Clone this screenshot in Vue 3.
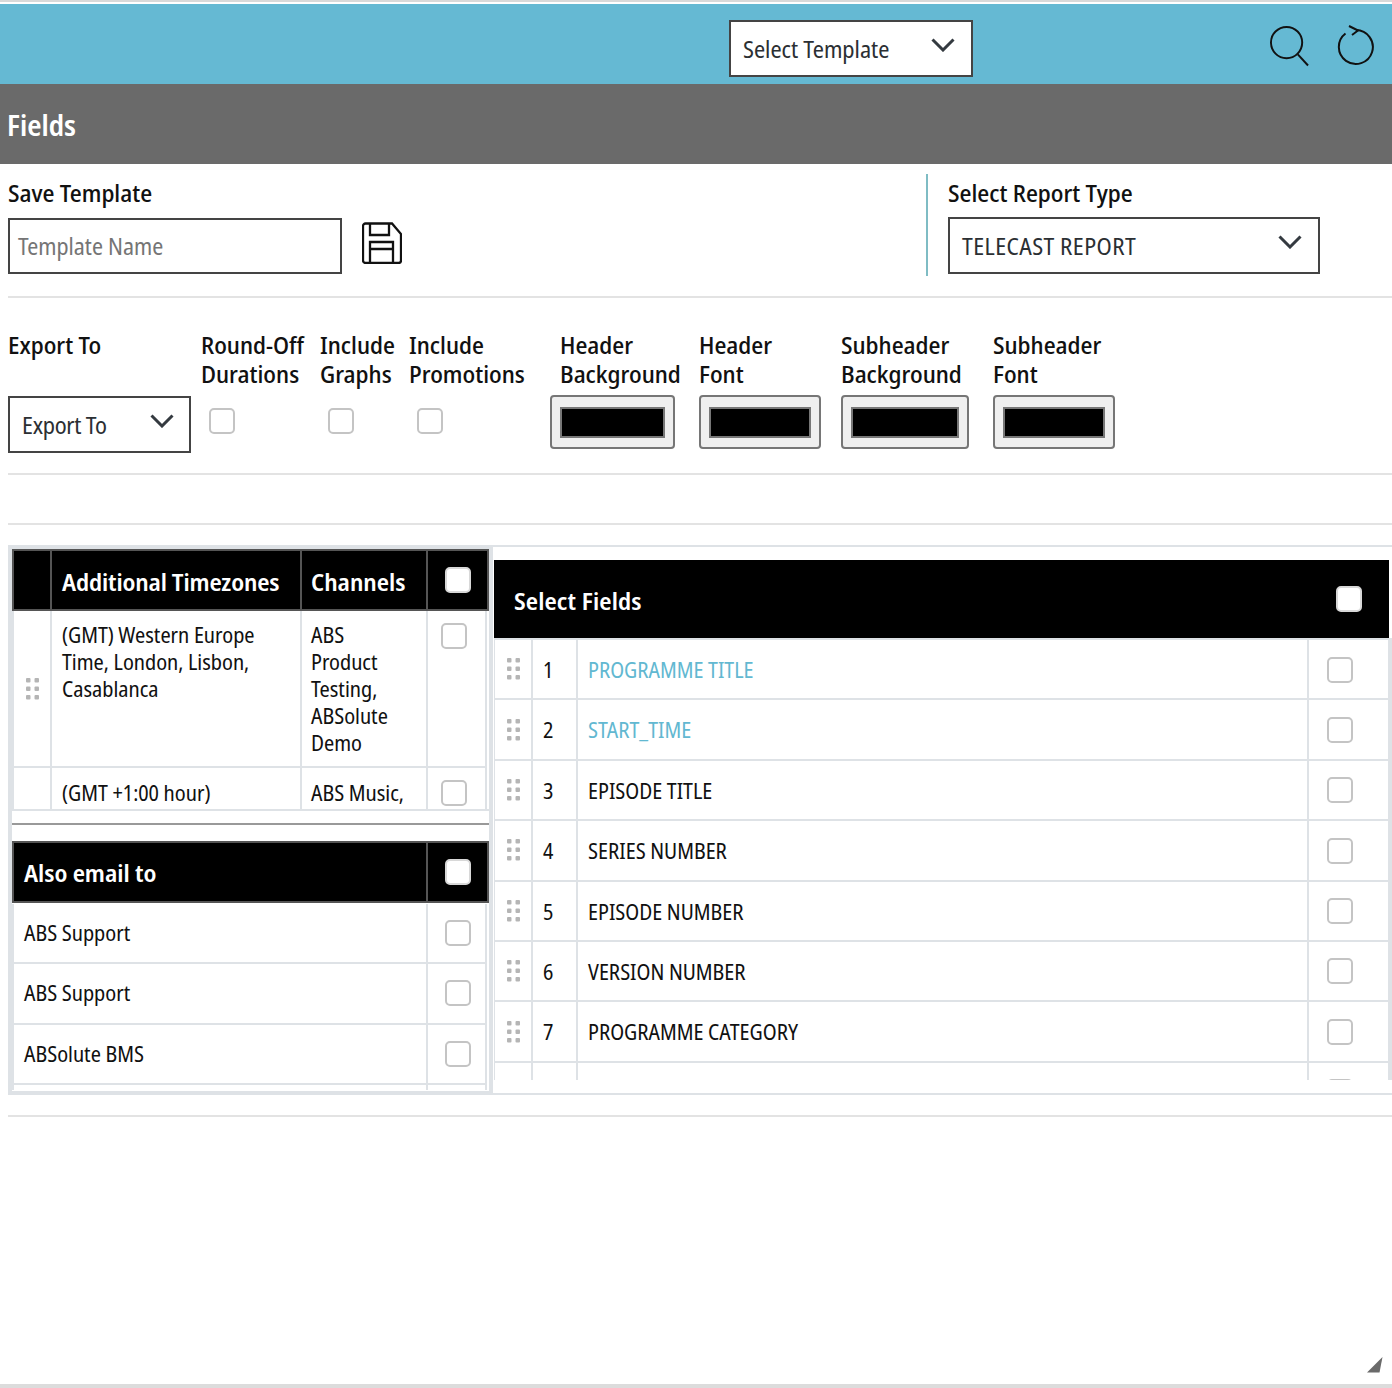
<script setup>
const exportChecks = [
  { label: ['Round-Off', 'Durations'], width: 119 },
  { label: ['Include', 'Graphs'], width: 89 },
  { label: ['Include', 'Promotions'], width: 141 },
]
const colours = [
  { label: ['Header', 'Background'], width: 149, box: 125, swatch: 105, first: true },
  { label: ['Header', 'Font'], width: 142, box: 122, swatch: 102 },
  { label: ['Subheader', 'Background'], width: 152, box: 128, swatch: 108 },
  { label: ['Subheader', 'Font'], width: 122, box: 122, swatch: 102 },
]
const zones = [
  { zone: ['(GMT) Western Europe', 'Time, London, Lisbon,', 'Casablanca'], channels: ['ABS', 'Product', 'Testing,', 'ABSolute', 'Demo'], handle: true },
  { zone: ['(GMT +1:00 hour)'], channels: ['ABS Music,'], handle: false },
]
const emails = ['ABS Support', 'ABS Support', 'ABSolute BMS', '']
const fields = [
  { n: 1, name: 'PROGRAMME TITLE', on: true },
  { n: 2, name: 'START_TIME', on: true },
  { n: 3, name: 'EPISODE TITLE' },
  { n: 4, name: 'SERIES NUMBER' },
  { n: 5, name: 'EPISODE NUMBER' },
  { n: 6, name: 'VERSION NUMBER' },
  { n: 7, name: 'PROGRAMME CATEGORY' },
  { n: '', name: '', blank: true },
]
const dots = [[0, 0], [8.5, 0], [0, 8.5], [8.5, 8.5], [0, 17], [8.5, 17]]
</script>

<template>
  <div class="page">
    <div class="topbar">
      <div class="select tpl">
        <span>Select Template</span>
        <svg class="chev" viewBox="0 0 24 14"><path d="M1.500 1.500 12 12 22.500 1.500" /></svg>
      </div>
      <svg class="ico search" viewBox="0 0 42 42"><circle cx="18" cy="17.500" r="16" /><path d="M29.500 29.500 40 41" /></svg>
      <svg class="ico refresh" viewBox="0 0 38 42"><path d="M8.500 8.500A17 17 0 1 0 19 5" /><path d="M12 1 21 5.500 15 10" /></svg>
    </div>
    <div class="fieldsbar">Fields</div>

    <section class="row-save">
      <div class="save-left">
        <div class="lbl">Save Template</div>
        <div class="save-line">
          <div class="input">Template Name</div>
          <svg class="floppy" viewBox="0 0 40 42">
            <path d="M3.500 1.500H30L39 12v26.500a2.500 2.500 0 0 1-2.500 2.500h-33A2.500 2.500 0 0 1 1 38.500V4a2.500 2.500 0 0 1 2.500-2.500Z" />
            <path d="M8 1.500V13H27V1.500M8 41V20H31V41M8 27H31" />
          </svg>
        </div>
      </div>
      <div class="save-right">
        <div class="lbl">Select Report Type</div>
        <div class="select report">
          <span>TELECAST REPORT</span>
          <svg class="chev" viewBox="0 0 24 14"><path d="M1.500 1.500 12 12 22.500 1.500" /></svg>
        </div>
      </div>
    </section>

    <section class="row-export">
      <div class="col col-export">
        <div class="lbl two">Export To</div>
        <div class="select exp">
          <span>Export To</span>
          <svg class="chev" viewBox="0 0 24 14"><path d="M1.500 1.500 12 12 22.500 1.500" /></svg>
        </div>
      </div>
      <div v-for="c in exportChecks" :key="c.label.join()" class="col" :style="{ width: c.width + 'px' }">
        <div class="lbl two"><div v-for="l in c.label" :key="l">{{ l }}</div></div>
        <span class="check opt"></span>
      </div>
      <div v-for="c in colours" :key="c.label.join()" class="col" :style="{ width: c.width + 'px' }">
        <div class="lbl two" :class="{ indent: c.first }"><div v-for="l in c.label" :key="l">{{ l }}</div></div>
        <div class="colorbox" :style="{ width: c.box + 'px' }">
          <div class="swatch" :style="{ width: c.swatch + 'px' }"></div>
        </div>
      </div>
    </section>

    <div class="spacer"></div>

    <section class="panels">
      <div class="left-panel">
        <div class="clip tz">
          <div class="head">
            <div class="c c-h"></div>
            <div class="c c-z th tight">Additional Timezones</div>
            <div class="c c-ch th">Channels</div>
            <div class="c c-k"><span class="check white"></span></div>
          </div>
          <div v-for="z in zones" :key="z.zone[0]" class="tr" :class="{ nudge: !z.handle }">
            <div class="c c-h mid">
              <svg v-if="z.handle" class="grip" viewBox="0 0 13 22"><rect v-for="d in dots" :key="d.join()" :x="d[0]" :y="d[1]" width="4.500" height="4.500" rx="1" /></svg>
            </div>
            <div class="c c-z td"><div v-for="l in z.zone" :key="l">{{ l }}</div></div>
            <div class="c c-ch td"><div v-for="l in z.channels" :key="l">{{ l }}</div></div>
            <div class="c c-k"><span class="check"></span></div>
          </div>
        </div>
        <div class="gap"><hr class="rule" /></div>
        <div class="clip em">
          <div class="head">
            <div class="c c-e th em-th">Also email to</div>
            <div class="c c-k2"><span class="check white"></span></div>
          </div>
          <div v-for="(e, i) in emails" :key="i" class="tr tr-email">
            <div class="c c-e td2">{{ e }}</div>
            <div class="c c-k2"><span v-if="e" class="check"></span></div>
          </div>
        </div>
      </div>

      <div class="right-panel">
        <div class="fhead">
          <span class="fhead-t">Select Fields</span>
          <span class="check white"></span>
        </div>
        <div class="clip fl">
          <div v-for="f in fields" :key="f.n" class="frow">
            <div class="f-h">
              <svg v-if="!f.blank" class="grip" viewBox="0 0 13 22"><rect v-for="d in dots" :key="d.join()" :x="d[0]" :y="d[1]" width="4.500" height="4.500" rx="1" /></svg>
            </div>
            <div class="f-n">{{ f.n }}</div>
            <div class="f-name" :class="{ on: f.on }">{{ f.name }}</div>
            <div class="f-k"><span class="check"></span></div>
          </div>
        </div>
      </div>
    </section>

    <div class="after"></div>
    <div class="grow"></div>
    <div class="foot"></div>
    <svg class="resize" viewBox="0 0 16 16">
      <path d="M0 15.500 15.500 0 12.500 15.500Z" fill="#6a6a6a" />
    </svg>
  </div>
</template>

<style>
html, body { margin: 0; background: #fff; }
</style>

<style scoped>
.page {
  position: relative;
  width: 1392px;
  height: 1388px;
  display: flex;
  flex-direction: column;
  font-family: "Noto Sans Display", "Noto Sans", sans-serif;
  font-stretch: 75%;
  font-size: 21px;
  line-height: 27px;
  color: #111;
  background: #fff;
  border-top: 2px solid #d9d9d9;
  box-sizing: border-box;
  overflow: hidden;
}
.topbar {
  margin-top: 2px;
  height: 80px;
  background: #65b9d3;
  display: flex;
  align-items: flex-start;
  position: relative;
  flex: none;
}
.select {
  box-sizing: border-box;
  display: flex;
  justify-content: space-between;
  align-items: center;
  border: 2px solid #444;
  background: #fff;
  height: 57px;
  color: #2b2f33;
  font-size: 23px;
}
.select span { margin-top: 2px; }
.chev { width: 24px; height: 14px; fill: none; stroke: #343a40; stroke-width: 3; margin-top: -8px; flex: none; }
.tpl { width: 244px; margin: 16px 0 0 729px; padding: 0 16px 0 12px; }
.ico { fill: none; stroke: #111; stroke-width: 2; flex: none; }
.search { width: 41px; height: 42px; margin: 21px 0 0 296px; }
.refresh { width: 38px; height: 42px; margin: 21px 0 0 27px; }
.fieldsbar {
  flex: none;
  height: 80px;
  box-sizing: border-box;
  background: #6a6a6a;
  color: #fff;
  font-weight: 600;
  font-size: 28px;
  line-height: 80px;
  padding: 1px 0 0 7px;
}
.row-save {
  flex: none;
  height: 134px;
  box-sizing: border-box;
  margin-left: 8px;
  border-bottom: 2px solid #e3e3e3;
  display: flex;
  justify-content: space-between;
}
.lbl { font-weight: 550; font-size: 24px; line-height: 29px; color: #111; }
.save-left { padding-top: 14px; }
.save-line { display: flex; align-items: flex-start; margin-top: 11px; }
.input {
  box-sizing: border-box;
  width: 334px;
  height: 56px;
  border: 2px solid #444;
  line-height: 54px;
  padding-left: 8px;
  color: #757575;
  font-size: 22.700px;
}
.floppy { width: 40px; height: 42px; margin: 4px 0 0 20px; fill: none; stroke: #111; stroke-width: 2.300; flex: none; }
.save-right {
  box-sizing: border-box;
  width: 466px;
  height: 102px;
  margin-top: 10px;
  border-left: 2px solid #7fbcc4;
  padding: 4px 0 0 20px;
}
.report { width: 372px; margin-top: 10px; padding: 0 16px 0 12px; letter-spacing: 0.4px; }
.row-export {
  flex: none;
  height: 177px;
  box-sizing: border-box;
  margin-left: 8px;
  padding-top: 32px;
  border-bottom: 2px solid #e3e3e3;
  display: flex;
}
.col { flex: none; box-sizing: border-box; }
.col-export { width: 193px; }
.two { height: 64px; }
.indent { padding-left: 10px; }
.exp { width: 183px; margin-top: 2px; padding: 0 15px 0 12px; letter-spacing: -0.3px; }
.opt { margin: 14px 0 0 8px; }
.check {
  display: block;
  box-sizing: border-box;
  width: 26px;
  height: 26px;
  border: 2px solid #c4c4c4;
  border-radius: 5px;
  background: #fff;
  flex: none;
}
.white { border-color: #d8d8d8; }
.colorbox {
  box-sizing: border-box;
  height: 54px;
  border: 2px solid #767676;
  border-radius: 4px;
  background: #efefef;
  display: flex;
  align-items: center;
  justify-content: center;
  margin-top: 1px;
}
.swatch { box-sizing: border-box; height: 31px; background: #000; border: 2px solid #777; }
.spacer {
  flex: none;
  height: 50px;
  box-sizing: border-box;
  margin-left: 8px;
  border-bottom: 2px solid #e3e3e3;
}
.panels {
  flex: none;
  height: 550px;
  margin: 20px 0 0 8px;
  display: flex;
}
.left-panel {
  box-sizing: border-box;
  width: 485px;
  height: 550px;
  background: #fff;
  border: 4px solid #dee2e6;
  flex: none;
}
.clip { overflow: hidden; }
.tz { height: 262px; box-sizing: border-box; border-bottom: 2px solid #dee2e6; }
.em { height: 249px; }
.gap { height: 30px; padding-top: 12px; box-sizing: border-box; }
.rule { margin: 0; border: 0; height: 2px; background: #999; }
.head {
  display: flex;
  background: #000;
  color: #fff;
  border: 2px solid #555;
  height: 62px;
  box-sizing: border-box;
}
.em .head { margin-bottom: 1px; }
.tr {
  display: flex;
  border-left: 2px solid #dee2e6;
  border-right: 2px solid #dee2e6;
  border-bottom: 2px solid #dee2e6;
  box-sizing: border-box;
  width: 475px;
}
.c { box-sizing: border-box; flex: none; }
.head .c + .c { border-left: 2px solid #555; }
.tr .c + .c { border-left: 2px solid #dee2e6; }
.c-h { width: 36px; }
.c-z { width: 250px; padding-left: 10px; }
.c-ch { width: 126px; padding-left: 9px; }
.c-k { width: 60px; padding: 12px 0 0 13px; }
.head .c-k { padding: 16px 0 0 17px; }
.mid { display: flex; align-items: center; justify-content: center; }
.th { font-weight: 600; font-size: 24px; line-height: 62px; }
.tight { letter-spacing: -0.15px; }
.em-th { line-height: 60px; }
.td { padding-top: 11px; padding-bottom: 9px; }
.nudge .td { padding-top: 12px; }
.grip { width: 13px; height: 22px; fill: #b5b5b5; flex: none; }
.c-e { width: 412px; padding-left: 10px; }
.c-k2 { width: 60px; padding: 16px 0 0 17px; }
.tr-email { height: 60.400px; }
.td2 { line-height: 58px; }
.right-panel {
  box-sizing: border-box;
  flex: 1;
  height: 550px;
  border-top: 2px solid #dee2e6;
  border-bottom: 2px solid #dee2e6;
  padding: 13px 3px 0 1px;
}
.fhead {
  height: 78px;
  background: #000;
  color: #fff;
  display: flex;
  align-items: center;
  justify-content: space-between;
  padding: 0 27px 0 20px;
  box-sizing: border-box;
  font-weight: 600;
  font-size: 24px;
  letter-spacing: 0.15px;
}
.fhead-t { margin-top: 2px; }
.fl { height: 440px; margin-right: -3px; border-top: 2px solid #dee2e6; }
.frow {
  display: flex;
  height: 60.400px;
  box-sizing: border-box;
  border-bottom: 2px solid #dee2e6;
  border-right: 4px solid #dee2e6;
}
.f-h { width: 37px; display: flex; align-items: center; justify-content: center; flex: none; border-left: 1px solid #dee2e6; box-sizing: border-box; }
.f-n { width: 45px; box-sizing: border-box; padding-left: 10px; border-left: 2px solid #dee2e6; line-height: 60px; flex: none; }
.f-name { flex: 1; box-sizing: border-box; padding-left: 10px; border-left: 2px solid #dee2e6; line-height: 60px; }
.on { color: #62b8d1; }
.f-k { width: 81px; box-sizing: border-box; border-left: 2px solid #dee2e6; padding: 16.500px 0 0 18px; flex: none; }
.after {
  flex: none;
  margin: 20px 0 0 8px;
  height: 2px;
  background: #e3e3e3;
}
.grow { flex: 1; }
.foot { flex: none; height: 4px; background: #dcdcdc; }
.resize { position: absolute; right: 9px; bottom: 15px; width: 16px; height: 16px; }
</style>
